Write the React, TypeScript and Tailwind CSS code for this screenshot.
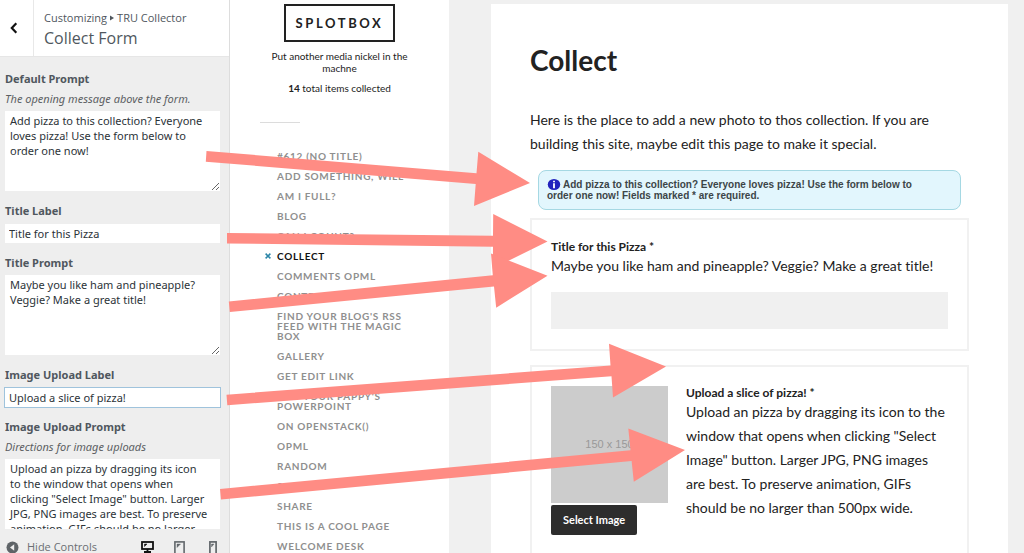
import React from "react";

type MenuItem = { label: string; current?: boolean };

const menu: MenuItem[] = [
  { label: "#612 (no title)" },
  { label: "Add Something, Will" },
  { label: "Am I Full?" },
  { label: "Blog" },
  { label: "Can I Count?" },
  { label: "Collect", current: true },
  { label: "Comments OPML" },
  { label: "Content" },
  { label: "Find Your Blog's RSS Feed With The Magic Box" },
  { label: "Gallery" },
  { label: "Get Edit Link" },
  { label: "Not Your Pappy's Powerpoint" },
  { label: "On OpenStack()" },
  { label: "OPML" },
  { label: "Random" },
  { label: "Search" },
  { label: "Share" },
  { label: "This is a Cool Page" },
  { label: "Welcome Desk" },
];

type FieldProps = {
  id: string;
  label: string;
  description?: string;
  value: string;
  multiline?: boolean;
  focused?: boolean;
};

function Field({ id, label, description, value, multiline, focused }: FieldProps) {
  return (
    <div className="flex flex-col">
      <label htmlFor={id} className="text-[11px] leading-4 font-bold text-[#50575e]">
        {label}
      </label>
      {description && (
        <p id={`${id}-description`} className="mt-1 text-[11px] leading-4 text-[#5c5f63] italic">
          {description}
        </p>
      )}
      {multiline ? (
        <textarea
          id={id}
          defaultValue={value}
          aria-describedby={description ? `${id}-description` : undefined}
          className="mt-1 h-20 resize-y overflow-hidden bg-white py-0.5 pr-1.5 pl-[5px] text-[11px] leading-[15px] text-[#2c3338] outline-none"
        />
      ) : (
        <input
          id={id}
          type="text"
          defaultValue={value}
          className={
            focused
              ? "mt-[5px] h-[19px] bg-white px-1 text-[11px] text-[#2c3338] ring-1 ring-[#9fc3dc] outline-none"
              : "mt-[5px] h-[19px] bg-white px-1 text-[11px] text-[#2c3338] outline-none"
          }
        />
      )}
    </div>
  );
}

function CustomizerPanel() {
  return (
    <aside className="flex w-[230px] shrink-0 flex-col border-r border-[#dddddd] bg-[#eeeeee] font-['Noto_Sans',sans-serif]">
      <header className="flex h-[57px] shrink-0 border-b border-[#e6e6e6] bg-white font-['Open_Sans',sans-serif]">
        <button
          type="button"
          aria-label="Back"
          className="flex w-[34px] items-center justify-center border-r border-[#e8e8e8] pr-1.5"
        >
          <svg width="8" height="12" viewBox="0 0 8 12" fill="none" stroke="#111" strokeWidth="2.2">
            <path d="M6.3 1.2 1.8 6l4.500 4.800" />
          </svg>
        </button>
        <div className="flex flex-col pt-2.5 pl-2.5 text-[#50575e]">
          <div className="flex items-center gap-[3px] text-[11px] leading-4">
            <span>Customizing</span>
            <svg width="4" height="6" viewBox="0 0 4 6" fill="#50575e">
              <path d="M0 0.500 4 3 0 5.500z" />
            </svg>
            <span>TRU Collector</span>
          </div>
          <h2 className="text-base leading-6">Collect Form</h2>
        </div>
      </header>

      <form className="flex min-h-0 flex-1 flex-col gap-3 overflow-hidden pt-3.5 pr-[9px] pl-[5px]">
        <Field
          id="default-prompt"
          label="Default Prompt"
          description="The opening message above the form."
          value="Add pizza to this collection? Everyone loves pizza! Use the form below to order one now!"
          multiline
        />
        <Field id="title-label" label="Title Label" value="Title for this Pizza" />
        <Field
          id="title-prompt"
          label="Title Prompt"
          value="Maybe you like ham and pineapple? Veggie? Make a great title!"
          multiline
        />
        <Field id="image-label" label="Image Upload Label" value="Upload a slice of pizza!" focused />
        <Field
          id="image-prompt"
          label="Image Upload Prompt"
          description="Directions for image uploads"
          value={
            'Upload an pizza by dragging its icon\nto the window that opens when\nclicking "Select Image" button. Larger\nJPG, PNG images are best. To preserve\nanimation, GIFs should be no larger\nthan 500px wide.'
          }
          multiline
        />
      </form>

      <footer className="flex h-6 shrink-0 items-start overflow-hidden pt-2.5 pr-3 pl-1.5 font-['Open_Sans',sans-serif] text-[#6b6f73]">
        <button type="button" className="flex items-center gap-2 text-[11px] leading-4">
          <svg width="13" height="13" viewBox="0 0 13 13">
            <circle cx="6.500" cy="6.500" r="6" fill="#5f6468" />
            <path d="M8.200 3.200v6.600L4 6.500z" fill="#eee" />
          </svg>
          Hide Controls
        </button>
        <div className="ml-auto flex items-start gap-5 pt-0.5">
          <button type="button" aria-label="Desktop preview">
            <svg width="13" height="12" viewBox="0 0 13 12" fill="none" stroke="#111">
              <rect x="1" y="1" width="11" height="7" strokeWidth="1.800" />
              <path d="M6.500 8v3M3 11h7" strokeWidth="1.800" />
              <path d="M3.500 5.500 6 3h-2.500z" fill="#111" strokeWidth="0.500" />
            </svg>
          </button>
          <button type="button" aria-label="Tablet preview">
            <svg width="11" height="14" viewBox="0 0 11 14" fill="none" stroke="#62676b">
              <rect x="0.900" y="0.900" width="9.200" height="12" strokeWidth="1.600" />
              <path d="M3 6.500 6.500 3H3z" fill="#62676b" strokeWidth="0.400" />
            </svg>
          </button>
          <button type="button" aria-label="Mobile preview" className="pl-1">
            <svg width="8" height="14" viewBox="0 0 8 14" fill="none" stroke="#62676b">
              <rect x="0.900" y="0.900" width="6.200" height="12" strokeWidth="1.700" />
              <path d="M2.500 6 5 3H2.500z" fill="#62676b" strokeWidth="0.400" />
            </svg>
          </button>
        </div>
      </footer>
    </aside>
  );
}

function SiteNavigation() {
  return (
    <div className="flex w-[219px] shrink-0 flex-col overflow-hidden bg-white px-[30px] pt-1 text-[#222]">
      <a
        href="#home"
        className="self-center border-2 border-[#222] px-2.5 py-2 text-[13px] leading-[18px] font-bold tracking-[0.2em]"
      >
        SPLOTBOX
      </a>
      <p className="mt-2 text-center text-[10px] leading-3">Put another media nickel in the machne</p>
      <p className="mt-2 text-center text-[10px] leading-3">
        <strong>14</strong> total items collected
      </p>
      <hr className="mt-7 w-10 border-[#dcdcdc]" />
      <nav className="mt-7 pl-[17px]">
        <ul className="flex flex-col gap-2.5">
          {menu.map((item) => (
            <li key={item.label} className="relative text-[10px] leading-[10px] font-bold tracking-[0.07em] uppercase">
              {item.current && (
                <svg
                  className="absolute top-0.5 -left-3"
                  width="6"
                  height="6"
                  viewBox="0 0 6 6"
                  stroke="#2b86a8"
                  strokeWidth="1.500"
                >
                  <path d="M0.600 0.600 5.400 5.400M5.400 0.600 0.600 5.400" />
                </svg>
              )}
              <a href="#page" className={item.current ? "block text-[#111]" : "block text-[#8f8f8f]"}>
                {item.label}
              </a>
            </li>
          ))}
        </ul>
      </nav>
    </div>
  );
}

function CollectPage() {
  return (
    <main className="min-w-0 flex-1 overflow-hidden bg-[#f0f0f0] pt-1 pr-4 pl-[42px] text-[#222] [font-variant-ligatures:none]">
      <article className="min-h-full bg-white px-[39px] pt-9">
        <h1 className="text-[28px] leading-10 font-bold">Collect</h1>
        <p className="mt-7 text-sm leading-6">
          Here is the place to add a new photo to thos collection. If you are building this site, maybe edit this page
          to make it special.
        </p>
        <div className="mx-2 mt-3.5 rounded-lg border border-[#a5d8e3] bg-[#e2f6fd] py-2 pr-6 pl-2 font-['Liberation_Sans',sans-serif] text-[10px] leading-[11px] font-bold text-[#3c4548]">
          <svg className="mr-0.5 inline-block align-text-bottom" width="14" height="11" viewBox="0 0 14 12">
            <ellipse cx="7" cy="6" rx="6.800" ry="6" fill="#2222bd" />
            <path d="M7 2v1.500M7 4.500v5.500" stroke="#fff" strokeWidth="2" />
          </svg>
          Add pizza to this collection? Everyone loves pizza! Use the form below to order one now! Fields marked * are
          required.
        </div>
        <form className="mt-2 flex flex-col gap-3.5">
          <div className="flex flex-col border-2 border-[#f1f1f1] px-[19px] py-5">
            <label htmlFor="item-title" className="text-xs leading-[14px] font-bold">
              Title for this Pizza *
            </label>
            <p className="text-sm leading-6">Maybe you like ham and pineapple? Veggie? Make a great title!</p>
            <input id="item-title" type="text" className="mt-3.5 h-[37px] bg-[#f0f0f0] px-3 text-sm outline-none" />
          </div>
          <div className="flex items-start gap-[18px] border-2 border-[#f1f1f1] px-[19px] py-[19px]">
            <div className="flex shrink-0 flex-col items-start">
              <div className="flex size-[117px] items-center justify-center bg-[#cccccc] font-['Liberation_Sans',sans-serif] text-[11px] text-[#999]">
                150 x 150
              </div>
              <button
                type="button"
                className="mt-0.5 rounded-xs bg-[#2d2d2d] px-3 py-1.5 text-[11px] leading-[18px] font-bold text-white"
              >
                Select Image
              </button>
            </div>
            <div className="min-w-0 flex-1">
              <h2 className="text-xs leading-[14px] font-bold">Upload a slice of pizza! *</h2>
              <p className="text-sm leading-6">
                Upload an pizza by dragging its icon to the window that opens when clicking "Select Image" button.
                Larger JPG, PNG images are best. To preserve animation, GIFs should be no larger than 500px wide.
              </p>
            </div>
          </div>
        </form>
      </article>
    </main>
  );
}

function Arrows() {
  return (
    <svg
      aria-hidden="true"
      className="pointer-events-none absolute top-0 left-0"
      width="700"
      height="553"
      viewBox="0 0 700 553"
      fill="#ff8c84"
    >
      <path d="M206.500 151 476.500 173.200 478.300 151.700 530 183 474 206 475.700 184 205.800 161.700z" />
      <path d="M227 233 493 235.800 493.200 214 547.500 241.500 492.800 268.500 493 246.800 227 243.500z" />
      <path d="M228.800 301.500 492.800 275.300 491 253.500 547.500 275.700 496.200 307.700 494 286.400 229.800 312z" />
      <path d="M226.500 394.700 610.500 365.600 609 343.700 666 366.500 613 397.400 611.500 376.300 227.300 405.200z" />
      <path d="M220 489 630.500 450.300 628.300 428.600 685 450 633.800 481.800 631.600 461 221 499.500z" />
    </svg>
  );
}

export default function App() {
  return (
    <div className="relative flex h-screen overflow-hidden bg-white font-[Lato,sans-serif]">
      <CustomizerPanel />
      <SiteNavigation />
      <CollectPage />
      <Arrows />
    </div>
  );
}
